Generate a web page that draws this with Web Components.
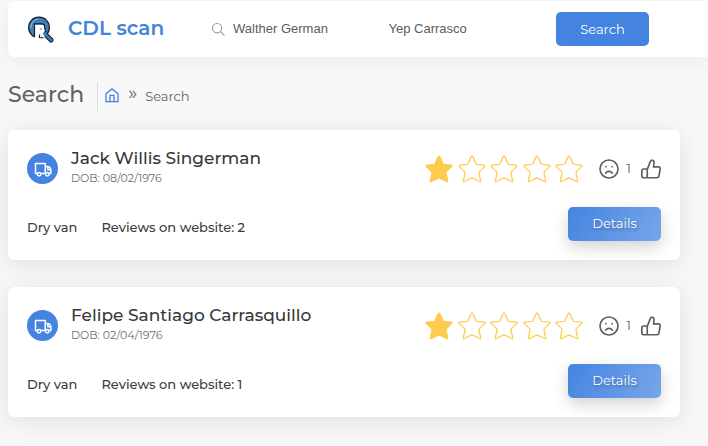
<!DOCTYPE html>
<html lang="en">
<head>
<meta charset="utf-8">
<title>CDL scan – Search</title>
<style>
  html { min-height: 100%; background: #f8f8f8; }
  body { margin: 0; font-family: Montserrat, Inter, "Open Sans", sans-serif; color: #3c3c3c; overflow-x: hidden; }
</style>
</head>
<body>
<cdl-app></cdl-app>
<script>
const define = (name, html, setup) => customElements.define(name, class extends HTMLElement {
  connectedCallback() {
    if (this.shadowRoot) return;
    const t = document.createElement('template');
    t.innerHTML = html;
    this.attachShadow({ mode: 'open' }).append(t.content.cloneNode(true));
    if (setup) setup(this, this.shadowRoot);
  }
});

const ICONS = {
  home: '<path d="M3 10.200 12 2.800l9 7.400V22H3Z"/><path d="M9 22V12.500h6V22"/>',
  search: '<circle cx="10.500" cy="10.500" r="8"/><path d="m16.500 16.500 6 6"/>',
  truck: '<path d="M4 18H2V4.500h13V18H9.500M15 8.500h2.500c3 0 5 2.500 5 5.500v4h-2M18.500 9.500V13H22"/><circle cx="6.700" cy="19" r="2.300"/><circle cx="17.800" cy="19" r="2.300"/>',
  sad: '<circle cx="12" cy="12" r="10.800"/><path d="M8 17c1.800-3 6.200-3 8 0"/><path d="M8.300 9v.2M15.700 9v.2"/>',
  thumb: '<path d="M7.500 22.500V12.500l3.700-9.300c.5-1.500 1.200-2 2.200-1.800 2 .3 2.500 2 2.200 4L15 9.500h6c1.500 0 2.200 1 2 2.300l-1.400 8.500c-.2 1.500-1 2.200-2.400 2.200H3c-1.300 0-2-.7-2-2V14c0-1.300.7-2 2-2h4.500"/>',
  star: '<path d="M12 1.700q.5 0 .8.700l2.400 5.300q.2.400.7.500l5.700.7q1.400.2.400 1.200l-4.200 4.200q-.3.300-.2.800l1.300 6.300q.2 1.100-.8.600l-5.600-2.700q-.5-.2-1 0L5.900 22q-1 .5-.8-.6l1.300-6.300q.1-.5-.2-.8L2 10.100q-1-1 .4-1.200l5.700-.7q.5-.1.700-.5l2.400-5.300q.3-.7.800-.7Z"/>'
};
define('ui-icon', `
  <style>
    :host { display: inline-flex; flex: none; width: var(--icon-size, 20px); height: var(--icon-size, 20px); }
    svg { width: 100%; height: 100%; fill: var(--icon-fill, none); stroke: currentColor; stroke-width: var(--icon-stroke, 2); stroke-linecap: round; stroke-linejoin: round; }
  </style>
  <svg viewBox="0 0 24 24" aria-hidden="true"></svg>`,
  (el, root) => { root.querySelector('svg').innerHTML = ICONS[el.getAttribute('name')]; });

define('ui-button', `
  <style>
    :host { display: block; width: 93px; }
    button { display: block; width: 100%; height: 34px; padding: 0; border: 0; border-radius: 5px; background: #4484e0; color: #fff; font: 400 13px/34px Montserrat, Inter, sans-serif; cursor: pointer; }
    :host([raised]) button { background: linear-gradient(118deg, #4484e0, #77a6e9); box-shadow: 0 6px 16px rgba(0,0,0,.18); text-shadow: 1px 2px 3px rgba(0,0,0,.3); line-height: 32px; padding-bottom: 2px; }
  </style>
  <button type="button"><slot></slot></button>`);

define('cdl-brand', `
  <style>
    :host { display: block; }
    a { display: flex; align-items: center; gap: 13px; padding-left: 1px; color: #4484d6; font-size: 20px; font-weight: 600; line-height: 28px; text-decoration: none; white-space: nowrap; }
    svg { width: 28px; height: 28px; flex: none; }
    span { padding-bottom: 2px; }
  </style>
  <a href="#">
    <svg viewBox="0 0 28 28" aria-hidden="true">
      <path d="m18 19 6 6" stroke="#15202b" stroke-width="5" stroke-linecap="round"/>
      <circle cx="12" cy="12.500" r="11" fill="#15202b"/>
      <circle cx="12" cy="12.500" r="9.800" fill="#3d7fba"/>
      <path d="M4 13C3.600 8.500 7 4.500 11 4" stroke="#9ac1e2" stroke-width="1" fill="none"/>
      <path d="M7.500 25V9.500H15c1.800.5 2.500 1.700 2.200 4l1 3-1.200.6 1 2.400-1 4-5 1.500Z" fill="#fff"/>
      <path d="M7.500 22V8.900h7.300c2.300 0 3.300 1.600 2.900 4l1.300 3.500-1.500.8v1.300" fill="none" stroke="#15202b" stroke-width="1.200"/>
      <path d="M14 13.500v1" stroke="#15202b" stroke-width="1.200"/>
      <path d="M12.500 19.500v3l4 .5" stroke="#15202b" stroke-width="1.200" fill="none"/>
      <path d="m17.500 18.500 6.500 6.500" stroke="#3478b5" stroke-width="3" stroke-linecap="round"/>
    </svg>
    <span>CDL scan</span>
  </a>`);

define('cdl-header', `
  <style>
    :host { display: block; background: #fff; border-radius: 6px 0 0 6px; box-shadow: 0 4px 20px rgba(0,0,0,.06); }
    form { display: grid; grid-template-columns: 185px 1fr 1fr auto; align-items: center; padding: 11px 59px 11px 18px; }
    .field { display: flex; align-items: center; gap: 8px; color: #9a9a9a; --icon-size: 14px; min-width: 0; }
    input { flex: 1; min-width: 0; padding: 0; border: 0; outline: 0; background: none; color: #5c5c5c; font: 13px/20px "Liberation Sans", Arial, sans-serif; }
    .last { padding-left: 5px; }
  </style>
  <form>
    <cdl-brand></cdl-brand>
    <div class="field"><ui-icon name="search"></ui-icon><input aria-label="First name" value="Walther German"></div>
    <div class="field last"><input aria-label="Last name" value="Yep Carrasco"></div>
    <ui-button>Search</ui-button>
  </form>`);

define('cdl-breadcrumb', `
  <style>
    :host { display: flex; align-items: center; color: #636363; }
    h1 { margin: 0; padding-right: 13px; border-right: 1px solid #d6dce1; font-size: 22px; font-weight: 500; line-height: 25px; padding-bottom: 4px; }
    nav { display: flex; align-items: center; gap: 8px; padding: 0 0 4px 6px; font-size: 13px; line-height: 20px; }
    a { display: flex; color: #4484e0; --icon-size: 16px; }
    .sep { padding-bottom: 3px; font-size: 19px; }
    .here { padding-top: 2px; }
  </style>
  <h1>Search</h1>
  <nav aria-label="Breadcrumb"><a href="#" aria-label="Home"><ui-icon name="home"></ui-icon></a><span class="sep">»</span><span class="here">Search</span></nav>`);

define('star-rating', `
  <style>
    :host { display: flex; justify-content: space-between; width: 160px; color: #ffcb4f; --icon-size: 30px; --icon-stroke: 1; }
    .on { --icon-fill: #ffcb4f; }
  </style>`,
  (el, root) => {
    const value = Number(el.getAttribute('value'));
    el.setAttribute('role', 'img');
    el.setAttribute('aria-label', value + ' of 5 stars');
    for (let i = 0; i < 5; i++) {
      const s = document.createElement('ui-icon');
      s.setAttribute('name', 'star');
      if (i < value) s.className = 'on';
      root.append(s);
    }
  });

define('driver-card', `
  <style>
    :host { display: grid; gap: 19px; padding: 19px; border-radius: 6px; background: #fff; box-shadow: 0 4px 24px rgba(0,0,0,.1); }
    .row { display: flex; align-items: center; }
    .avatar { display: grid; place-items: center; width: 31px; height: 31px; margin-right: 13px; border-radius: 50%; background: #4484e0; color: #fff; --icon-size: 18px; }
    .who { flex: 1; min-width: 0; }
    h2 { margin: 0; font-size: 17px; font-weight: 500; line-height: 18px; padding-bottom: 2px; color: #383838; }
    .dob { font-size: 11px; line-height: 19px; color: #6e6e6e; }
    .votes { display: flex; align-items: center; gap: 7px; margin-left: 15px; color: #5e5e5e; font-size: 13px; line-height: 20px; }
    .votes span { padding-bottom: 2px; }
    .votes button { display: flex; padding: 0; border: 0; background: none; color: inherit; cursor: pointer; }
    .up { margin-left: 3px; }
    .facts { align-items: end; gap: 24px; font-size: 13px; font-weight: 500; line-height: 28px; }
    ui-button { margin-left: auto; }
  </style>
  <div class="row">
    <span class="avatar"><ui-icon name="truck"></ui-icon></span>
    <div class="who"><h2><slot name="name"></slot></h2><div class="dob">DOB: <slot name="dob"></slot></div></div>
    <star-rating value="1"></star-rating>
    <div class="votes">
      <button type="button" aria-label="Dislike"><ui-icon name="sad"></ui-icon></button><span>1</span>
      <button type="button" class="up" aria-label="Like"><ui-icon name="thumb"></ui-icon></button>
    </div>
  </div>
  <div class="row facts">
    <span>Dry van</span><span>Reviews on website: <slot name="reviews"></slot></span>
    <ui-button raised>Details</ui-button>
  </div>`);

define('cdl-app', `
  <style>
    :host { display: block; padding: 1px 0 29px 8px; }
    cdl-breadcrumb { margin-top: 25px; }
    main { display: grid; gap: 27px; margin: 19px 28px 0 0; }
  </style>
  <cdl-header></cdl-header>
  <cdl-breadcrumb></cdl-breadcrumb>
  <main>
    <driver-card><span slot="name">Jack Willis Singerman</span><span slot="dob">08/02/1976</span><span slot="reviews">2</span></driver-card>
    <driver-card><span slot="name">Felipe Santiago Carrasquillo</span><span slot="dob">02/04/1976</span><span slot="reviews">1</span></driver-card>
  </main>`);
</script>
</body>
</html>
